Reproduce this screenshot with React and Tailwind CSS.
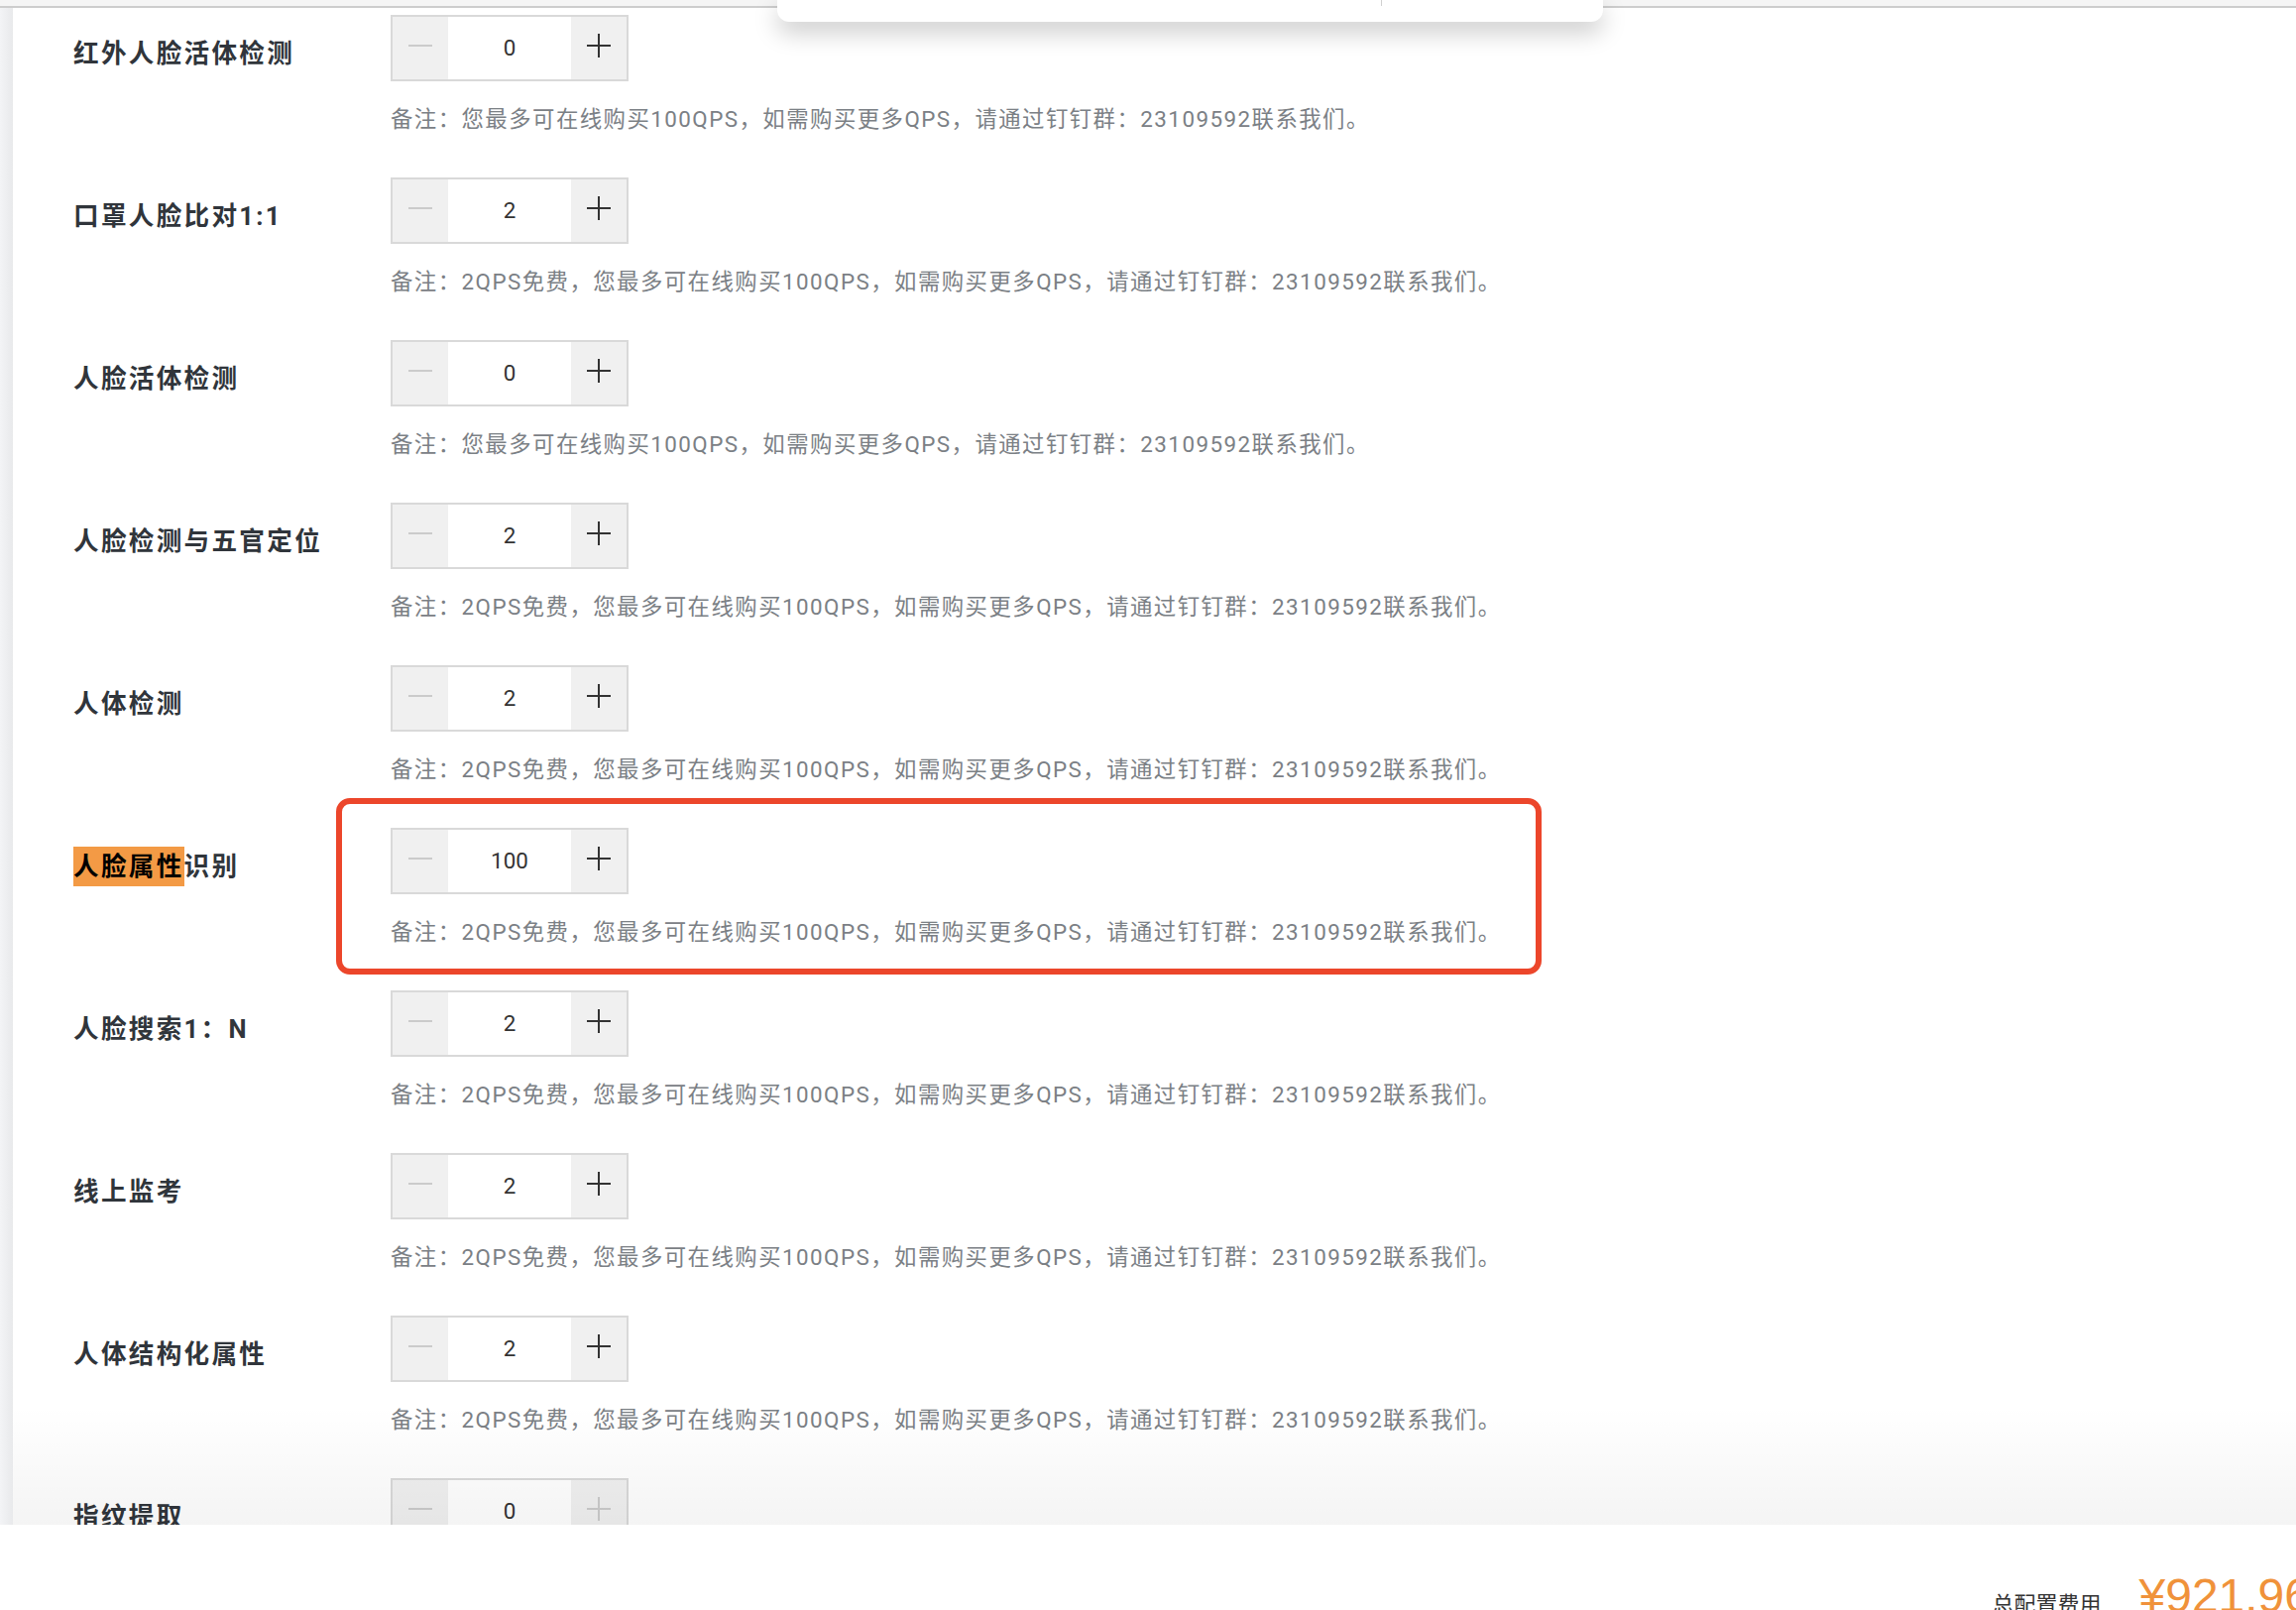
import React from 'react';

const noteFree = '备注：2QPS免费，您最多可在线购买100QPS，如需购买更多QPS，请通过钉钉群：23109592联系我们。';
const notePaid = '备注：您最多可在线购买100QPS，如需购买更多QPS，请通过钉钉群：23109592联系我们。';

const items = [
  { name: '红外人脸活体检测', value: 0, note: notePaid },
  { name: '口罩人脸比对1:1', value: 2, note: noteFree },
  { name: '人脸活体检测', value: 0, note: notePaid },
  { name: '人脸检测与五官定位', value: 2, note: noteFree },
  { name: '人体检测', value: 2, note: noteFree },
  { name: '识别', mark: '人脸属性', value: 100, note: noteFree, boxed: true },
  { name: '人脸搜索1：N', value: 2, note: noteFree },
  { name: '线上监考', value: 2, note: noteFree },
  { name: '人体结构化属性', value: 2, note: noteFree },
  { name: '指纹提取', value: 0, note: notePaid, disabled: true },
];

const font = { fontFamily: 'Roboto, "Noto Sans CJK SC", sans-serif' };

const Minus = () => (
  <svg width="24" height="24" viewBox="0 0 24 24">
    <line x1="0" y1="12" x2="24" y2="12" stroke="#cbcbcb" strokeWidth="2" />
  </svg>
);

const Plus = ({ muted }) => (
  <svg width="24" height="24" viewBox="0 0 24 24">
    <line x1="0" y1="12" x2="24" y2="12" stroke={muted ? '#cbcbcb' : '#333'} strokeWidth="2" />
    <line x1="12" y1="0" x2="12" y2="24" stroke={muted ? '#cbcbcb' : '#333'} strokeWidth="2" />
  </svg>
);

const Stepper = ({ value, disabled }) => (
  <div className="flex h-[67px] w-[240px] border-2 border-[#d9d9d9] bg-white">
    <button className="flex w-[56px] items-center justify-center bg-[#f0f0f0] pb-[6px]">
      <Minus />
    </button>
    <div className="flex flex-1 items-center justify-center text-[22.4px] text-[#333]">{value}</div>
    <button className="flex w-[56px] items-center justify-center bg-[#f0f0f0] pb-[6px]">
      <Plus muted={disabled} />
    </button>
  </div>
);

const Row = ({ item }) => (
  <div className="relative flex h-[164px] shrink-0 pl-[61px]">
    <div className="w-[320px] pt-[19px]">
      <div className="text-[25.6px] font-bold leading-[40px] tracking-[2.3px] text-[#30353b]">
        {item.mark && (
          <span className="inline-block bg-[#f39a45] text-black">{item.mark}</span>
        )}
        {item.name}
      </div>
    </div>
    <div className="flex flex-col">
      <Stepper value={item.value} disabled={item.disabled} />
      <p className="mt-[26px] whitespace-nowrap text-[22.4px] leading-[24px] tracking-[1.45px] text-[#7b8085]">
        {item.note}
      </p>
    </div>
    {item.boxed && (
      <div className="pointer-events-none absolute left-[326px] top-[-30px] h-[178px] w-[1216px] rounded-[14px] border-[6px] border-[#ec462b]" />
    )}
  </div>
);

export default function App() {
  return (
    <div className="relative h-[1624px] w-full overflow-hidden bg-white" style={font}>
      {/* top strip */}
      <div className="h-[8px] border-b-2 border-[#cdcdcd] bg-[#f5f5f5]" />

      {/* popup edge hanging from the top */}
      <div className="absolute left-[784px] top-0 h-[22px] w-[833px] rounded-b-[12px] bg-white shadow-[0_10px_24px_rgba(0,0,0,0.22)]">
        <div className="ml-[609px] h-[6px] w-px bg-[#d0d0d0]" />
      </div>

      <div className="flex h-[1530px]">
        <div className="w-[13px] bg-linear-to-r from-[#f3f4f6] to-[#e8e9eb]" />
        <div className="relative flex flex-1 flex-col overflow-hidden pt-[7px]">
          {items.map((item, i) => (
            <Row key={i} item={item} />
          ))}
          <div className="pointer-events-none absolute inset-x-0 bottom-0 h-[120px] bg-linear-to-b from-transparent to-[rgba(0,0,0,0.045)]" />
        </div>
      </div>

      {/* footer */}
      <div className="flex h-[86px] items-baseline justify-end gap-[38px] pt-[48px]">
        <span className="text-[22px] text-[#333]" style={{ fontFamily: '"Noto Sans CJK SC", sans-serif' }}>
          总配置费用
        </span>
        <span
          className="-mr-[15px] text-[48px] leading-none text-[#f0923a]"
          style={{ fontFamily: '"Liberation Sans", sans-serif' }}
        >
          ¥921.96
        </span>
      </div>
    </div>
  );
}
